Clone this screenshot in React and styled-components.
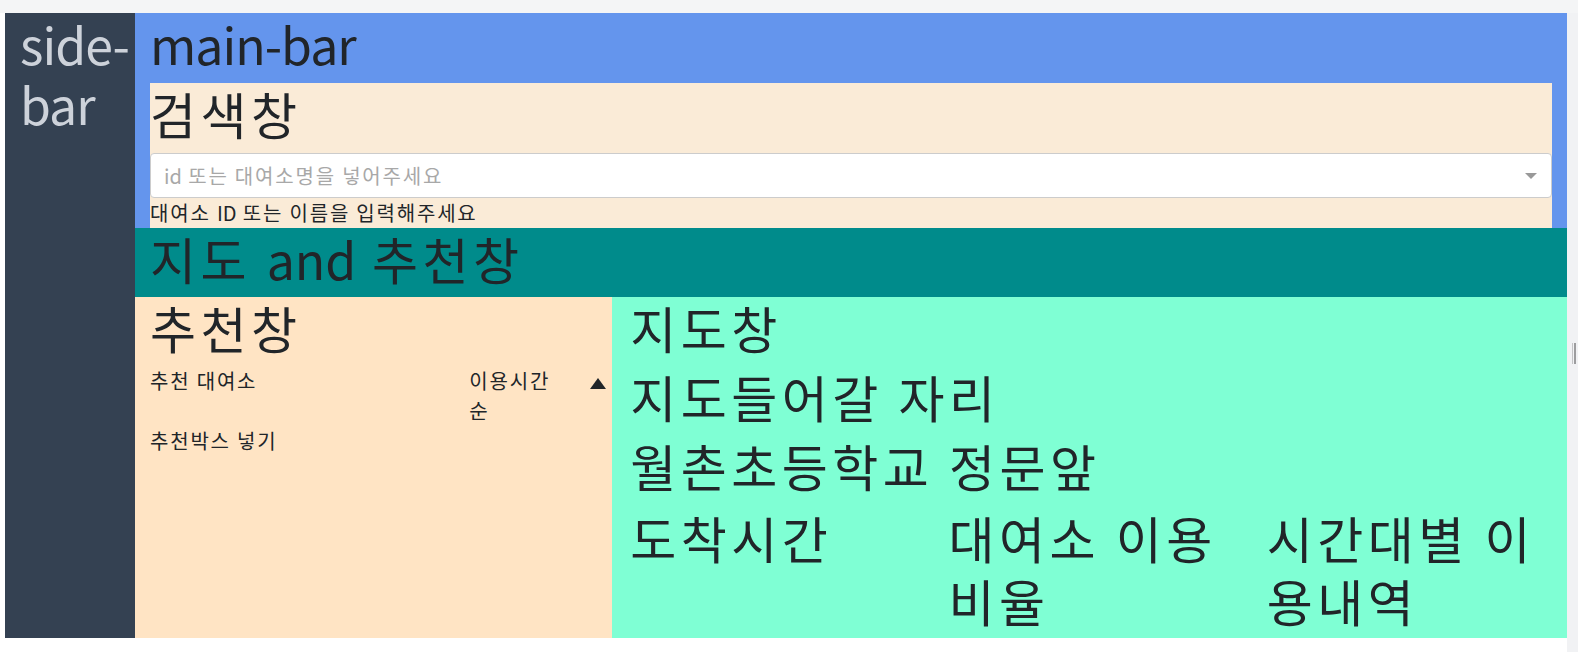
import React from "react"
import styled, { createGlobalStyle } from "styled-components"

const GlobalStyle = createGlobalStyle`
  * {
    box-sizing: border-box;
  }

  html,
  body {
    margin: 0;
    padding: 0;
    background: #fff;
  }

  body {
    color: #212529;
    font-family: "Noto Sans CJK KR", "Noto Sans", sans-serif;
    font-size: 20px;
    letter-spacing: 0.09em;
    line-height: 1.5;
  }
`

const Frame = styled.div`
  display: flex;
  flex-direction: column;
  height: 652px;
  width: 1578px;
  overflow: hidden;
`

const TopStrip = styled.div`
  background: #f4f5f6;
  flex-shrink: 0;
  height: 13px;
`

const Stage = styled.div`
  display: flex;
  flex: 1;
  min-height: 0;
`

const Page = styled.div`
  align-items: flex-start;
  display: flex;
  flex: 1;
  padding-left: 5px;
`

const Gutter = styled.div`
  background: #f1f2f4;
  flex-shrink: 0;
  padding: 330px 0 0 5px;
  width: 11px;
`

const Handle = styled.div`
  border-left: 1px solid #c4c4c6;
  border-right: 2px solid #9d9d9f;
  height: 21px;
  width: 4px;
`

const Layout = styled.div`
  align-items: stretch;
  display: flex;
  flex: 1;
`

const Sidebar = styled.aside`
  background: #344152;
  color: #cdd2da;
  flex-shrink: 0;
  padding: 0 15px;
  width: 130px;
`

const Main = styled.main`
  display: flex;
  flex: 1;
  flex-direction: column;
  min-width: 0;
`

const Heading = styled.h1`
  font-size: 50px;
  font-weight: 400;
  letter-spacing: ${(p) => (p.$latin ? "-0.02em" : "0.09em")};
  line-height: ${(p) => p.$line || 60}px;
  margin: 0 0 ${(p) => (p.$gap === undefined ? 10 : p.$gap)}px;
  padding: ${(p) => (p.$inset ? `0 ${p.$inset}px` : 0)};
`

const Latin = styled.span`
  letter-spacing: 0;
`

const MainBar = styled.header`
  background: #6495ed;
  padding: 0 15px;
`

const SearchBox = styled.section`
  background: #faebd7;
`

const SelectBox = styled.div`
  align-items: center;
  background: #fff;
  border: 1px solid #cccccc;
  border-radius: 4px;
  display: flex;
  height: 45px;
  justify-content: space-between;
  padding: 0 14px 0 13px;
`

const Placeholder = styled.span`
  color: #a8a8a8;
  font-size: 20px;
`

const Caret = styled.span`
  border-left: 6px solid transparent;
  border-right: 6px solid transparent;
  border-top: 6px solid #999;
  height: 0;
  width: 0;
`

const Hint = styled.div`
  font-size: 20px;
  line-height: 30px;
`

const Banner = styled.section`
  background: #008b8b;
  padding: 0 15px;
`

const Split = styled.div`
  display: flex;
`

const Recommend = styled.section`
  background: #ffe4c4;
  flex: 0 0 33.3333%;
  padding: 0 6px 0 15px;
`

const SortRow = styled.div`
  align-items: flex-start;
  display: flex;
  margin-top: 9px;
`

const RowLabel = styled.span`
  flex: 1;
`

const SortLabel = styled.span`
  margin-right: 31px;
  width: 90px;
`

const SortArrow = styled.span`
  border-bottom: 11px solid #212529;
  border-left: 8px solid transparent;
  border-right: 8px solid transparent;
  height: 0;
  margin-top: 12px;
  width: 0;
`

const MapPanel = styled.section`
  background: #7fffd4;
  flex: 0 0 66.6667%;
`

const Columns = styled.div`
  display: grid;
  grid-template-columns: repeat(3, 1fr);
  padding-top: 2px;
`

const App = () => {
  return (
    <Frame>
      <GlobalStyle />
      <TopStrip />
      <Stage>
        <Page>
          <Layout>
            <Sidebar>
              <Heading $gap={0} $latin>
                side-bar
              </Heading>
            </Sidebar>
            <Main>
              <MainBar>
                <Heading $latin>main-bar</Heading>
                <SearchBox>
                  <Heading>검색창</Heading>
                  <SelectBox>
                    <Placeholder>
                      <Latin>id</Latin> 또는 대여소명을 넣어주세요
                    </Placeholder>
                    <Caret />
                  </SelectBox>
                  <Hint>
                    대여소 <Latin>ID</Latin> 또는 이름을 입력해주세요
                  </Hint>
                </SearchBox>
              </MainBar>
              <Banner>
                <Heading $gap={9}>
                  지도 <Latin>and</Latin> 추천창
                </Heading>
              </Banner>
              <Split>
                <Recommend>
                  <Heading $gap={8}>추천창</Heading>
                  <SortRow>
                    <RowLabel>추천 대여소</RowLabel>
                    <SortLabel>이용시간 순</SortLabel>
                    <SortArrow />
                  </SortRow>
                  <div>추천박스 넣기</div>
                </Recommend>
                <MapPanel>
                  <Heading $gap={9} $inset={18}>지도창</Heading>
                  <Heading $gap={9} $inset={18}>지도들어갈 자리</Heading>
                  <Heading $gap={9} $inset={18}>월촌초등학교 정문앞</Heading>
                  <Columns>
                    <Heading $gap={6} $inset={18} $line={63}>도착시간</Heading>
                    <Heading $gap={6} $inset={18} $line={63}>대여소 이용 비율</Heading>
                    <Heading $gap={6} $inset={18} $line={63}>시간대별 이용내역</Heading>
                  </Columns>
                </MapPanel>
              </Split>
            </Main>
          </Layout>
        </Page>
        <Gutter>
          <Handle />
        </Gutter>
      </Stage>
    </Frame>
  )
}

export default App
